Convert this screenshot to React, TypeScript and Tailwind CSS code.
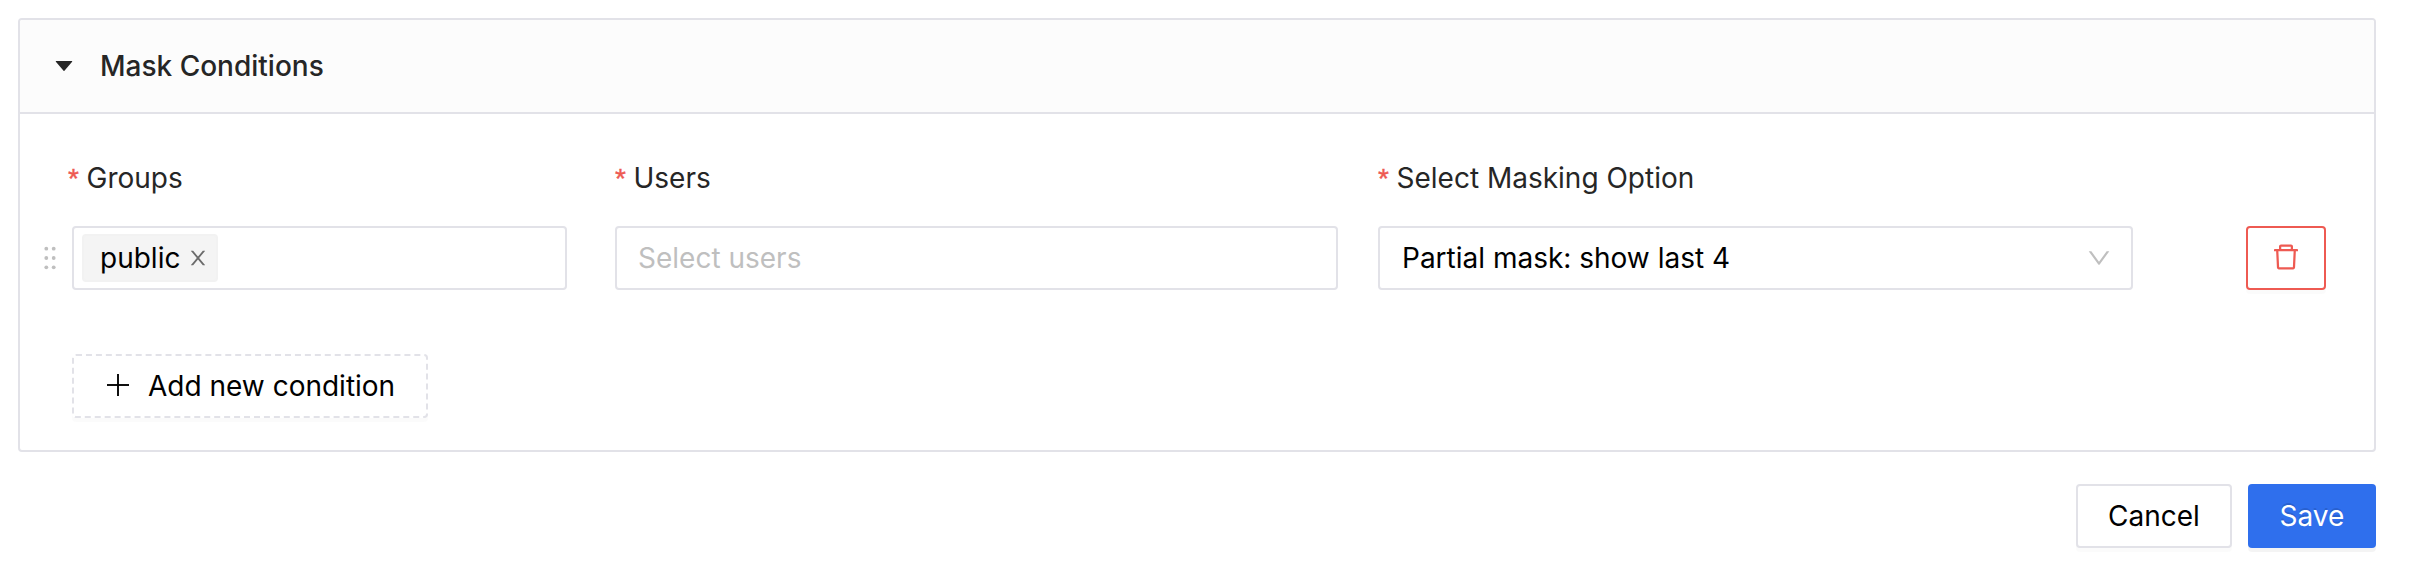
import React from "react";
import { AiFillCaretDown, AiOutlineDelete, AiOutlineDown, AiOutlinePlus } from "react-icons/ai";

const ICON_BOX = "64 64 896 896";

function Label({ children, className = "" }: { children: React.ReactNode; className?: string }) {
  return (
    <label className={`flex h-16 items-center text-[28px] text-[#262626] ${className}`}>
      <span className="flex items-baseline">
        <span className="w-[18.5px] font-['Liberation_Sans',sans-serif] text-[#ee5a52] [-webkit-text-stroke:0.4px_#ee5a52]">
          *
        </span>
        <span>{children}</span>
      </span>
    </label>
  );
}

function DragHandle() {
  return (
    <svg className="h-6 w-3 text-[#bfbfbf]" viewBox="0 0 12 24" fill="currentColor">
      {[2.7, 12, 21.3].map((y) => (
        <g key={y}>
          <circle cx="2.3" cy={y} r="1.9" />
          <circle cx="9.7" cy={y} r="1.9" />
        </g>
      ))}
    </svg>
  );
}

function CloseIcon() {
  return (
    <svg className="ml-2 size-5 text-[#6b6b6b]" viewBox={ICON_BOX} fill="currentColor">
      <path d="M563.8 512l262.5-312.9c4.4-5.2.7-13.1-6.1-13.1h-79.8c-4.7 0-9.2 2.1-12.3 5.7L511.6 449.8 295.1 191.7c-3-3.6-7.5-5.7-12.3-5.7H203c-6.8 0-10.5 7.9-6.1 13.1L459.4 512 196.9 824.9A7.95 7.95 0 0 0 203 838h79.8c4.7 0 9.2-2.1 12.3-5.7l216.5-258.1 216.5 258.1c3 3.6 7.5 5.7 12.3 5.7h79.8c6.8 0 10.5-7.9 6.1-13.1L563.8 512z" />
    </svg>
  );
}

function PlusIcon() {
  return (
    <svg className="-mt-0.5 mr-4 size-7" viewBox={ICON_BOX} fill="currentColor">
      <path d="M482 160h60v704h-60z" />
      <path d="M160 482h704v60H160z" />
    </svg>
  );
}

export default function App() {
  return (
    <main className="h-[570px] w-[2410px] bg-white pt-[18px] pl-[18px] font-['Inter',sans-serif] text-[28px] leading-[44px] text-black">
      <div className="w-[2358px]">
        <section className="h-[434px] rounded-[4px] border-2 border-[#e2e2e8]">
          <header className="flex h-[94px] items-center rounded-t-[2px] border-b-2 border-[#e2e2e8] bg-[#fcfcfc] pl-8 font-medium text-[#262626]">
            <AiFillCaretDown viewBox="0 0 1024 1024" className="mr-6 size-6" />
            Mask Conditions
          </header>

          <div className="flex pt-8 pl-6">
            <div className="mt-20 flex h-16 w-7 items-center">
              <DragHandle />
            </div>
            <div className="flex w-[495px] flex-col gap-4">
              <Label className="-ml-1">Groups</Label>
              <div className="flex h-16 items-center rounded-[4px] border-2 border-[#e2e2e8] pl-2">
                <span className="flex h-12 w-[136px] items-center rounded-[4px] border-2 border-[#f2f2f2] bg-[#f4f4f4] pl-4">
                  public
                  <CloseIcon />
                </span>
              </div>
            </div>
            <div className="ml-12 flex w-[723px] flex-col gap-4">
              <Label>Users</Label>
              <div className="flex h-16 items-center rounded-[4px] border-2 border-[#e2e2e8] pl-[21px] text-[#bfbfbf]">
                Select users
              </div>
            </div>
            <div className="ml-10 flex w-[755px] flex-col gap-4">
              <Label>Select Masking Option</Label>
              <div className="flex h-16 items-center justify-between rounded-[4px] border-2 border-[#e2e2e8] pr-5 pl-[22px]">
                Partial mask: show last 4
                <AiOutlineDown viewBox={ICON_BOX} className="size-6 text-[#bfbfbf]" />
              </div>
            </div>
            <button
              aria-label="Delete condition"
              className="mt-20 ml-[113px] flex h-16 w-20 items-center justify-center rounded-[4px] border-2 border-[#ee5a52] text-[#ee5a52] shadow-[0_4px_0_rgba(0,0,0,0.016)]"
            >
              <AiOutlineDelete viewBox={ICON_BOX} className="-mt-0.5 size-7" />
            </button>
          </div>

          <button className="mt-16 ml-[52px] flex h-16 w-[356px] items-center rounded-[4px] border-2 border-dashed border-[#e2e2e8] bg-white pl-[30px] shadow-[0_4px_0_rgba(0,0,0,0.016)]">
            <PlusIcon />
            Add new condition
          </button>
        </section>

        <footer className="mt-8 flex justify-end gap-4">
          <button className="h-16 w-[156px] rounded-[4px] border-2 border-[#e2e2e8] bg-white shadow-[0_4px_0_rgba(0,0,0,0.016)]">
            Cancel
          </button>
          <button className="h-16 w-32 rounded-[4px] bg-[#2f6fed] text-white shadow-[0_4px_0_rgba(0,0,0,0.045)] [text-shadow:0_-2px_0_rgba(0,0,0,0.12)]">
            Save
          </button>
        </footer>
      </div>
    </main>
  );
}
